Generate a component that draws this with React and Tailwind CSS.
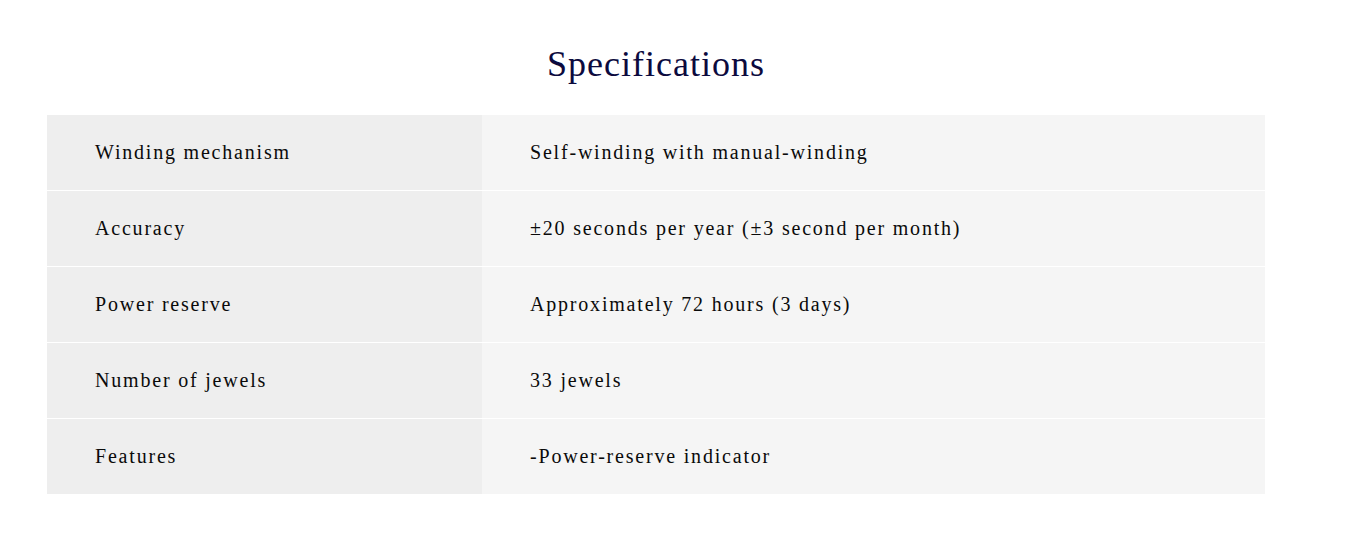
import React from 'react';

const specs = [
  ['Winding mechanism', 'Self-winding with manual-winding'],
  ['Accuracy', '±20 seconds per year (±3 second per month)'],
  ['Power reserve', 'Approximately 72 hours (3 days)'],
  ['Number of jewels', '33 jewels'],
  ['Features', '-Power-reserve indicator'],
];

export default function App() {
  return (
    <div className="min-h-[550px] bg-white pt-[38px]" style={{ fontFamily: '"Liberation Serif", "DejaVu Serif", serif' }}>
      <div className="ml-[47px] w-[1218px]">
        <h2 className="text-center text-[36px] leading-[52px] tracking-[1px] text-[#0c0a3e] mb-[25px]">Specifications</h2>
        <div className="flex flex-col">
          {specs.map(([label, value], i) => (
            <div key={label} className={i < specs.length - 1 ? 'flex h-[76px] border-b border-white' : 'flex h-[75px]'}>
              <div className="w-[435px] bg-[#eeeeee] flex items-center pl-[48px] pb-[2px] text-[20px] tracking-[1.8px] text-[#0a0a0a]">
                {label}
              </div>
              <div className="flex-1 bg-[#f5f5f5] flex items-center pl-[48px] pb-[2px] text-[20px] tracking-[1.8px] text-[#0a0a0a]">
                {value}
              </div>
            </div>
          ))}
        </div>
      </div>
    </div>
  );
}
